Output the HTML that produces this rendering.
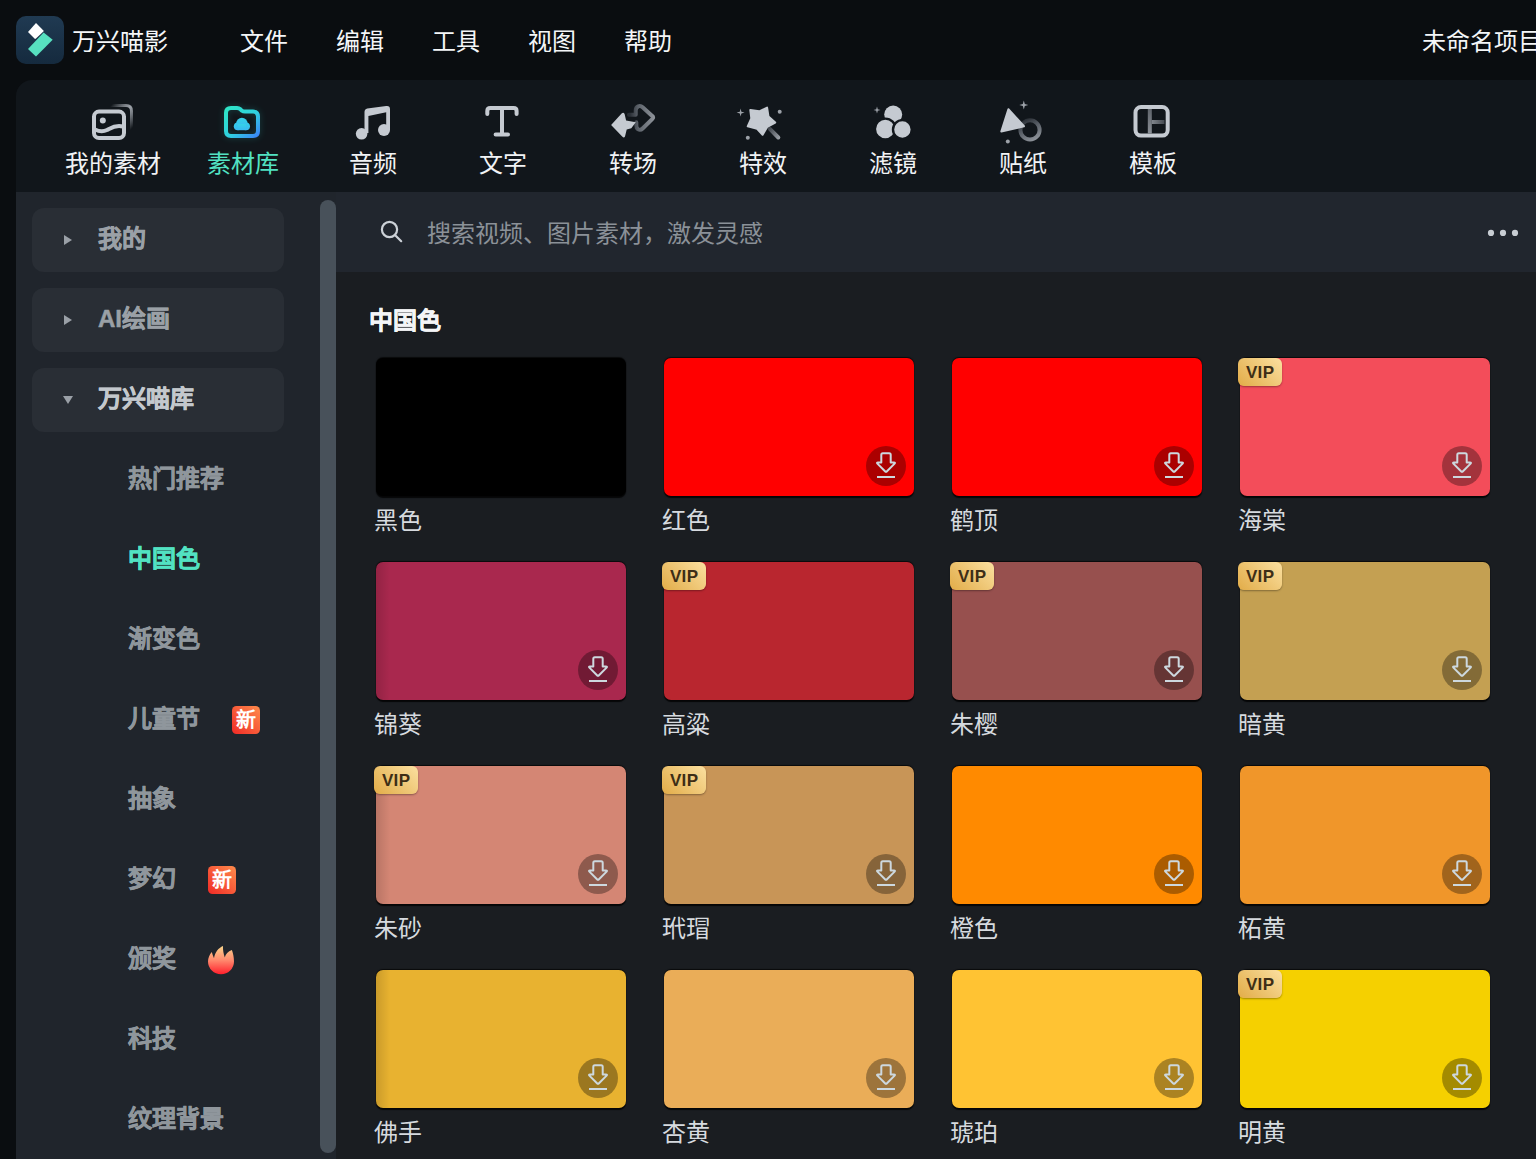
<!DOCTYPE html>
<html lang="zh-CN"><head><meta charset="utf-8">
<style>
*{margin:0;padding:0;box-sizing:border-box}
html,body{width:1536px;height:1159px;overflow:hidden;background:#0a0d10;font-family:"Liberation Sans",sans-serif;color:#fff}
.a{position:absolute}
.t{position:absolute;white-space:nowrap;line-height:1}
#top{left:0;top:0;width:1536px;height:80px;background:#0a0d10}
.menu{font-size:24px;color:#f4f6f8;top:29.5px}
#tool{left:16px;top:80px;width:1536px;height:112px;background:#11161b;border-top-left-radius:16px}
.tl{font-size:24px;color:#f1f3f5;top:152px}
.tl.on{color:#52e2c2}
#side{left:16px;top:192px;width:320px;height:967px;background:#20252c}
.sb{left:32px;width:252px;height:64px;background:#292e35;border-radius:12px}
.sbt{font-size:24px;font-weight:bold;color:#9aa0a6;-webkit-text-stroke:0.5px currentColor}
.si{font-size:24px;font-weight:bold;color:#8f969c;-webkit-text-stroke:0.5px currentColor}
#scroll{left:320px;top:200px;width:16px;height:953px;background:#48515a;border-radius:8px}
#search{left:336px;top:192px;width:1200px;height:80px;background:#21262e}
#content{left:336px;top:272px;width:1200px;height:887px;background:#1a1d21}
.card{position:absolute;width:250px;height:138px;border-radius:7px;box-shadow:0 1.5px 1px rgba(0,0,0,.8),0 -1px 1px rgba(0,0,0,.65),0 0 1px rgba(0,0,0,.35)}
.lsh{position:absolute;left:0;top:0;bottom:0;width:14px;border-radius:6px 0 0 6px;background:linear-gradient(90deg,rgba(0,0,0,.13),rgba(0,0,0,0))}
.lab{position:absolute;font-size:24px;color:#d6dadf;line-height:1;white-space:nowrap}
.dl{position:absolute;right:8px;bottom:10px;width:40px;height:40px;border-radius:50%;background:rgba(0,0,0,.33)}
.dl svg{position:absolute;left:0;top:0}
.vip{position:absolute;left:-2px;top:0;width:44px;height:28px;border-radius:6px;background:linear-gradient(225deg,#fbe0a0 0%,#efc878 45%,#e2ac48 100%);font-size:17px;font-weight:bold;color:#3d2e16;text-align:center;line-height:30px;letter-spacing:0.3px;text-indent:0.3px;box-shadow:0 1px 2px rgba(0,0,0,.35)}
</style></head><body>
<div id="top" class="a"></div>
<!-- logo -->
<div class="a" style="left:16px;top:16px;width:48px;height:48px;border-radius:10px;background:linear-gradient(180deg,#203a52,#152a3e)"></div>
<svg class="a" style="left:16px;top:16px" width="48" height="48" viewBox="0 0 48 48">
<path d="M20 7 L27.9 14.9 L20 22.5 L19 23 L12 16 Z" fill="#fff" transform="translate(0,0)"/>
<path d="M12 33 L27.6 16.5 L36.7 23.7 L20 40.6 Z" fill="#57e0bf"/>
</svg>
<div class="t menu" style="left:72px">万兴喵影</div>
<div class="t menu" style="left:240px">文件</div>
<div class="t menu" style="left:336px">编辑</div>
<div class="t menu" style="left:432px">工具</div>
<div class="t menu" style="left:528px">视图</div>
<div class="t menu" style="left:624px">帮助</div>
<div class="t menu" style="left:1422px">未命名项目</div>

<div id="tool" class="a"></div>
<div class="t tl" style="left:65px">我的素材</div>
<div class="t tl on" style="left:207px">素材库</div>
<div class="t tl" style="left:349px">音频</div>
<div class="t tl" style="left:479px">文字</div>
<div class="t tl" style="left:609px">转场</div>
<div class="t tl" style="left:739px">特效</div>
<div class="t tl" style="left:869px">滤镜</div>
<div class="t tl" style="left:999px">贴纸</div>
<div class="t tl" style="left:1129px">模板</div>
<!--ICONS-->
<svg class="a" style="left:0;top:0" width="1536" height="200" viewBox="0 0 1536 200">
<defs>
<linearGradient id="gFold" x1="0" y1="0" x2="1" y2="1"><stop offset="0" stop-color="#2ee6c6"/><stop offset="0.55" stop-color="#2fd0e0"/><stop offset="1" stop-color="#3b86f6"/></linearGradient>
<linearGradient id="gCloud" x1="0" y1="0" x2="0" y2="1"><stop offset="0" stop-color="#35d2e8"/><stop offset="1" stop-color="#38b8f2"/></linearGradient>
<linearGradient id="gArc" x1="0" y1="0" x2="1" y2="1"><stop offset="0" stop-color="#c5cad1" stop-opacity="0"/><stop offset="0.5" stop-color="#9ea3aa"/><stop offset="1" stop-color="#c5cad1" stop-opacity="0"/></linearGradient>
<linearGradient id="gTr" x1="630" y1="0" x2="654" y2="0" gradientUnits="userSpaceOnUse"><stop offset="0" stop-color="#2a2f36"/><stop offset="0.35" stop-color="#5d636b"/><stop offset="1" stop-color="#8d9299"/></linearGradient>
<linearGradient id="gWand" x1="769" y1="127" x2="780" y2="138" gradientUnits="userSpaceOnUse"><stop offset="0" stop-color="#3a3f46"/><stop offset="1" stop-color="#9da2a9"/></linearGradient>
<linearGradient id="gRing" x1="1024" y1="118" x2="1036" y2="142" gradientUnits="userSpaceOnUse"><stop offset="0" stop-color="#22272e"/><stop offset="0.45" stop-color="#5a6068"/><stop offset="1" stop-color="#969ba2"/></linearGradient>
<linearGradient id="gTplV" x1="0" y1="107" x2="0" y2="136" gradientUnits="userSpaceOnUse"><stop offset="0" stop-color="#5c6168"/><stop offset="1" stop-color="#8e939a"/></linearGradient>
<linearGradient id="gTplH" x1="1150" y1="0" x2="1166" y2="0" gradientUnits="userSpaceOnUse"><stop offset="0" stop-color="#8a8f96"/><stop offset="1" stop-color="#3e434a"/></linearGradient>
<filter id="glow" x="-50%" y="-50%" width="200%" height="200%"><feGaussianBlur stdDeviation="3"/></filter>
</defs>
<g fill="none" stroke="#c5cad1" stroke-linecap="round" stroke-linejoin="round">
 <!-- my media -->
 <path d="M111 105.5 H126 Q131.5 105.5 131.5 111 V129" stroke="url(#gArc)" stroke-width="3"/>
 <rect x="94" y="111.6" width="30" height="26.4" rx="5" stroke-width="4"/>
 <path d="M95 129.5 C99 131.5 103 132 107 130 C111 128 115 124.5 123 126.5" stroke-width="4"/>
 <!-- folder glow -->
 <path d="M226 113 Q226 108 231 108 H237 Q239 108 240.5 109.3 L242 110.8 Q243 111.6 245 111.6 H253 Q258 111.6 258 116.6 V131 Q258 136 253 136 H231 Q226 136 226 131 Z" stroke="#2fd9cf" stroke-width="5" opacity="0.18" filter="url(#glow)"/>
 <path d="M226 113 Q226 108 231 108 H237 Q239 108 240.5 109.3 L242 110.8 Q243 111.6 245 111.6 H253 Q258 111.6 258 116.6 V131 Q258 136 253 136 H231 Q226 136 226 131 Z" stroke="url(#gFold)" stroke-width="4"/>
 <!-- T -->
 <path d="M487.3 114 V111 Q487.3 108 490.3 108 H513.6 Q516.6 108 516.6 111 V114" stroke-width="4"/>
 <path d="M502 108 V134.4 M495.6 134.4 H508" stroke-width="4"/>
 <!-- transition outline arrow -->
 <path d="M629 114.8 H635.7 V110.5 Q635.7 107.6 638.2 106.4 Q640.6 105.4 642.6 107.2 L652.2 116 Q654 117.2 652.4 118.8 L642.6 128.5 Q640.5 130.5 638 129.3 Q636.3 128.2 636.3 125.5 V122.3" stroke="url(#gTr)" stroke-width="4"/>
 <!-- wand -->
 <path d="M769.8 128.8 L778.3 137.5" stroke="url(#gWand)" stroke-width="4"/>
 <!-- sticker ring -->
 <circle cx="1030" cy="129.9" r="9.6" stroke="url(#gRing)" stroke-width="4"/>
 <!-- template -->
 <rect x="1135.5" y="107" width="32.2" height="28.6" rx="5.5" stroke-width="4"/>
 <path d="M1149.8 109 V133.6" stroke="url(#gTplV)" stroke-width="4" stroke-linecap="butt"/>
 <path d="M1151.8 122 H1164.5" stroke="url(#gTplH)" stroke-width="4" stroke-linecap="butt"/>
</g>
<g fill="#c5cad1">
 <circle cx="102.8" cy="120.6" r="3"/>
 <g fill="url(#gCloud)"><circle cx="237.7" cy="126.3" r="3.9"/><circle cx="246.1" cy="126.3" r="3.9"/><circle cx="241.9" cy="123.6" r="5.8"/><rect x="237.7" y="124" width="8.4" height="6.2"/></g>
 <!-- music -->
 <circle cx="361.6" cy="133.8" r="5.8"/>
 <circle cx="384" cy="130" r="6"/>
 <path d="M364.5 133 V112 Q364.5 109.2 367.3 108.6 L386.2 106 Q390 105.5 390 109.2 V130 H386.2 V112.2 L368.4 115.9 V133 Z"/>
 <!-- transition solid arrow -->
 <path d="M611.1 125 L621.6 113.6 Q623.4 111.8 624.6 114 L626.1 120.4 L635.8 122.3 L631.3 128.2 L626.7 129.5 L625 136.5 Q624 138.5 622.2 136.6 Z"/>
 <!-- star -->
 <path d="M767.1 107.6 L768.5 116.6 L775.2 122.5 L767.3 126.8 L762.6 134.8 L757.1 128.8 L747.7 126.4 L751.3 118.4 L750.3 110 L759.3 111.3 Z" stroke="#c5cad1" stroke-width="2" stroke-linejoin="round"/>
 <circle cx="779.7" cy="111.7" r="2" fill="#9ca1a8"/>
 <circle cx="747.8" cy="137.7" r="2" fill="#9ca1a8"/>
 <path d="M740.6 108.6 L741.4 111.8 L744.6 112.6 L741.4 113.4 L740.6 116.6 L739.8 113.4 L736.6 112.6 L739.8 111.8 Z" fill="#9ca1a8"/>
 <!-- filters -->
 <circle cx="893.2" cy="114.5" r="9"/>
 <circle cx="885.3" cy="129" r="10.4" stroke="#11161b" stroke-width="2.4"/>
 <circle cx="902.4" cy="129.5" r="9.4" stroke="#11161b" stroke-width="2.4"/>
 <path d="M877 106.5 L877.8 109.2 L880.5 110 L877.8 110.8 L877 113.5 L876.2 110.8 L873.5 110 L876.2 109.2 Z" fill="#9ca1a8"/>
 <!-- sticker -->
 <path d="M1008.4 109.3 L1024 126.25 L1001.3 131.5 Z" stroke="#c5cad1" stroke-width="2" stroke-linejoin="round"/>
 <path d="M1023.8 100.5 L1024.8 104 L1028.3 105 L1024.8 106 L1023.8 109.5 L1022.8 106 L1019.3 105 L1022.8 104 Z" fill="#9ca1a8"/>
 <circle cx="1007.8" cy="141.6" r="2" fill="#9ca1a8"/>
</g>
</svg>
<!--/ICONS-->

<div id="side" class="a"></div>
<div class="a sb" style="top:208px"></div>
<div class="a sb" style="top:288px"></div>
<div class="a sb" style="top:368px"></div>
<div class="t sbt" style="left:98px;top:227px">我的</div>
<div class="t sbt" style="left:98px;top:307px">AI绘画</div>
<div class="t sbt" style="left:98px;top:387px;color:#c3c8cd">万兴喵库</div>
<div class="t si" style="left:128px;top:467px">热门推荐</div>
<div class="t si" style="left:128px;top:547px;color:#52e2c2">中国色</div>
<div class="t si" style="left:128px;top:627px">渐变色</div>
<div class="t si" style="left:128px;top:707px">儿童节</div>
<div class="t si" style="left:128px;top:787px">抽象</div>
<div class="t si" style="left:128px;top:867px">梦幻</div>
<div class="t si" style="left:128px;top:947px">颁奖</div>
<div class="t si" style="left:128px;top:1027px">科技</div>
<div class="t si" style="left:128px;top:1107px">纹理背景</div>
<div id="scroll" class="a"></div>
<svg class="a" style="left:0;top:192px" width="336" height="967" viewBox="0 192 336 967">
<defs>
<linearGradient id="gNew" x1="1" y1="0" x2="0" y2="1"><stop offset="0" stop-color="#ff8c4c"/><stop offset="1" stop-color="#f02a26"/></linearGradient>
<linearGradient id="gFire" x1="0" y1="0" x2="0" y2="1"><stop offset="0" stop-color="#f9d58c"/><stop offset="0.5" stop-color="#ff8a6e"/><stop offset="1" stop-color="#ff1f2c"/></linearGradient>
</defs>
<g fill="#9aa0a7">
<path d="M64 235 L72 240 L64 245 Z"/>
<path d="M64 315 L72 320 L64 325 Z"/>
<path d="M63 396 L73 396 L68 404 Z"/>
</g>
<rect x="232" y="706" width="28" height="28" rx="4.5" fill="url(#gNew)"/>
<rect x="208" y="866" width="28" height="28" rx="4.5" fill="url(#gNew)"/>
<path transform="translate(208,946)" d="M3.8 6 C1.5 8.5 0 12 0 15.5 A13 12.7 0 0 0 26 15.5 C26 11 25 7 23.9 3.9 C20 5 17.6 8 16.8 11.4 C15.6 8 14.8 4 15 0 C10.5 2 7 6 6 12.3 C5 10 4.3 8 3.8 6 Z" fill="url(#gFire)"/>
</svg>
<div class="t" style="left:236px;top:710px;font-size:20px;font-weight:bold;color:#fff">新</div>
<div class="t" style="left:212px;top:870px;font-size:20px;font-weight:bold;color:#fff">新</div>


<div id="search" class="a"></div>
<div id="content" class="a"></div>
<svg class="a" style="left:336px;top:192px" width="1200" height="80" viewBox="336 192 1200 80">
<g fill="none" stroke="#ccd1d7" stroke-width="2.2" stroke-linecap="round"><circle cx="389.5" cy="229.5" r="7.6"/><path d="M395.2 235.2 L401.2 241.2"/></g>
<g fill="#c8cdd3"><circle cx="1491" cy="232.9" r="3.1"/><circle cx="1503" cy="232.9" r="3.1"/><circle cx="1515" cy="232.9" r="3.1"/></g>
</svg>

<div class="t" style="left:427px;top:222px;font-size:24px;color:#8b9198">搜索视频、图片素材，激发灵感</div>
<div class="t" style="left:369px;top:309px;font-size:24px;font-weight:bold;color:#f4f5f7;-webkit-text-stroke:0.5px currentColor">中国色</div>
<!--CARDS-->
<div class="card" style="left:376px;top:358px;background:#000000"><div class="lsh"></div></div>
<div class="lab" style="left:374px;top:509px">黑色</div>
<div class="card" style="left:664px;top:358px;background:#ff0000"><div class="dl"><svg width="40" height="40" viewBox="0 0 40 40"><path d="M15.3 16.5 V8.7 Q15.3 7.2 16.8 7.2 H23.2 Q24.7 7.2 24.7 8.7 V16.5 H28 Q29.6 16.5 28.6 17.6 L21 25.2 Q20 26.2 19 25.2 L11.4 17.6 Q10.4 16.5 12 16.5 Z" fill="none" stroke="#cdd8de" stroke-width="2" stroke-linejoin="round"/><rect x="11" y="30" width="18" height="2" fill="#cdd8de"/></svg></div></div>
<div class="lab" style="left:662px;top:509px">红色</div>
<div class="card" style="left:952px;top:358px;background:#ff0000"><div class="dl"><svg width="40" height="40" viewBox="0 0 40 40"><path d="M15.3 16.5 V8.7 Q15.3 7.2 16.8 7.2 H23.2 Q24.7 7.2 24.7 8.7 V16.5 H28 Q29.6 16.5 28.6 17.6 L21 25.2 Q20 26.2 19 25.2 L11.4 17.6 Q10.4 16.5 12 16.5 Z" fill="none" stroke="#cdd8de" stroke-width="2" stroke-linejoin="round"/><rect x="11" y="30" width="18" height="2" fill="#cdd8de"/></svg></div></div>
<div class="lab" style="left:950px;top:509px">鹤顶</div>
<div class="card" style="left:1240px;top:358px;background:#f34d5a"><div class="dl"><svg width="40" height="40" viewBox="0 0 40 40"><path d="M15.3 16.5 V8.7 Q15.3 7.2 16.8 7.2 H23.2 Q24.7 7.2 24.7 8.7 V16.5 H28 Q29.6 16.5 28.6 17.6 L21 25.2 Q20 26.2 19 25.2 L11.4 17.6 Q10.4 16.5 12 16.5 Z" fill="none" stroke="#cdd8de" stroke-width="2" stroke-linejoin="round"/><rect x="11" y="30" width="18" height="2" fill="#cdd8de"/></svg></div><div class="vip">VIP</div></div>
<div class="lab" style="left:1238px;top:509px">海棠</div>
<div class="card" style="left:376px;top:562px;background:#a9284e"><div class="lsh"></div><div class="dl"><svg width="40" height="40" viewBox="0 0 40 40"><path d="M15.3 16.5 V8.7 Q15.3 7.2 16.8 7.2 H23.2 Q24.7 7.2 24.7 8.7 V16.5 H28 Q29.6 16.5 28.6 17.6 L21 25.2 Q20 26.2 19 25.2 L11.4 17.6 Q10.4 16.5 12 16.5 Z" fill="none" stroke="#cdd8de" stroke-width="2" stroke-linejoin="round"/><rect x="11" y="30" width="18" height="2" fill="#cdd8de"/></svg></div></div>
<div class="lab" style="left:374px;top:713px">锦葵</div>
<div class="card" style="left:664px;top:562px;background:#b9262f"><div class="vip">VIP</div></div>
<div class="lab" style="left:662px;top:713px">高粱</div>
<div class="card" style="left:952px;top:562px;background:#97504e"><div class="dl"><svg width="40" height="40" viewBox="0 0 40 40"><path d="M15.3 16.5 V8.7 Q15.3 7.2 16.8 7.2 H23.2 Q24.7 7.2 24.7 8.7 V16.5 H28 Q29.6 16.5 28.6 17.6 L21 25.2 Q20 26.2 19 25.2 L11.4 17.6 Q10.4 16.5 12 16.5 Z" fill="none" stroke="#cdd8de" stroke-width="2" stroke-linejoin="round"/><rect x="11" y="30" width="18" height="2" fill="#cdd8de"/></svg></div><div class="vip">VIP</div></div>
<div class="lab" style="left:950px;top:713px">朱樱</div>
<div class="card" style="left:1240px;top:562px;background:#c4a052"><div class="dl"><svg width="40" height="40" viewBox="0 0 40 40"><path d="M15.3 16.5 V8.7 Q15.3 7.2 16.8 7.2 H23.2 Q24.7 7.2 24.7 8.7 V16.5 H28 Q29.6 16.5 28.6 17.6 L21 25.2 Q20 26.2 19 25.2 L11.4 17.6 Q10.4 16.5 12 16.5 Z" fill="none" stroke="#cdd8de" stroke-width="2" stroke-linejoin="round"/><rect x="11" y="30" width="18" height="2" fill="#cdd8de"/></svg></div><div class="vip">VIP</div></div>
<div class="lab" style="left:1238px;top:713px">暗黄</div>
<div class="card" style="left:376px;top:766px;background:#d48674"><div class="lsh"></div><div class="dl"><svg width="40" height="40" viewBox="0 0 40 40"><path d="M15.3 16.5 V8.7 Q15.3 7.2 16.8 7.2 H23.2 Q24.7 7.2 24.7 8.7 V16.5 H28 Q29.6 16.5 28.6 17.6 L21 25.2 Q20 26.2 19 25.2 L11.4 17.6 Q10.4 16.5 12 16.5 Z" fill="none" stroke="#cdd8de" stroke-width="2" stroke-linejoin="round"/><rect x="11" y="30" width="18" height="2" fill="#cdd8de"/></svg></div><div class="vip">VIP</div></div>
<div class="lab" style="left:374px;top:917px">朱砂</div>
<div class="card" style="left:664px;top:766px;background:#c89557"><div class="dl"><svg width="40" height="40" viewBox="0 0 40 40"><path d="M15.3 16.5 V8.7 Q15.3 7.2 16.8 7.2 H23.2 Q24.7 7.2 24.7 8.7 V16.5 H28 Q29.6 16.5 28.6 17.6 L21 25.2 Q20 26.2 19 25.2 L11.4 17.6 Q10.4 16.5 12 16.5 Z" fill="none" stroke="#cdd8de" stroke-width="2" stroke-linejoin="round"/><rect x="11" y="30" width="18" height="2" fill="#cdd8de"/></svg></div><div class="vip">VIP</div></div>
<div class="lab" style="left:662px;top:917px">玳瑁</div>
<div class="card" style="left:952px;top:766px;background:#ff8a00"><div class="dl"><svg width="40" height="40" viewBox="0 0 40 40"><path d="M15.3 16.5 V8.7 Q15.3 7.2 16.8 7.2 H23.2 Q24.7 7.2 24.7 8.7 V16.5 H28 Q29.6 16.5 28.6 17.6 L21 25.2 Q20 26.2 19 25.2 L11.4 17.6 Q10.4 16.5 12 16.5 Z" fill="none" stroke="#cdd8de" stroke-width="2" stroke-linejoin="round"/><rect x="11" y="30" width="18" height="2" fill="#cdd8de"/></svg></div></div>
<div class="lab" style="left:950px;top:917px">橙色</div>
<div class="card" style="left:1240px;top:766px;background:#f0962a"><div class="dl"><svg width="40" height="40" viewBox="0 0 40 40"><path d="M15.3 16.5 V8.7 Q15.3 7.2 16.8 7.2 H23.2 Q24.7 7.2 24.7 8.7 V16.5 H28 Q29.6 16.5 28.6 17.6 L21 25.2 Q20 26.2 19 25.2 L11.4 17.6 Q10.4 16.5 12 16.5 Z" fill="none" stroke="#cdd8de" stroke-width="2" stroke-linejoin="round"/><rect x="11" y="30" width="18" height="2" fill="#cdd8de"/></svg></div></div>
<div class="lab" style="left:1238px;top:917px">柘黄</div>
<div class="card" style="left:376px;top:970px;background:#e8b230"><div class="lsh"></div><div class="dl"><svg width="40" height="40" viewBox="0 0 40 40"><path d="M15.3 16.5 V8.7 Q15.3 7.2 16.8 7.2 H23.2 Q24.7 7.2 24.7 8.7 V16.5 H28 Q29.6 16.5 28.6 17.6 L21 25.2 Q20 26.2 19 25.2 L11.4 17.6 Q10.4 16.5 12 16.5 Z" fill="none" stroke="#cdd8de" stroke-width="2" stroke-linejoin="round"/><rect x="11" y="30" width="18" height="2" fill="#cdd8de"/></svg></div></div>
<div class="lab" style="left:374px;top:1121px">佛手</div>
<div class="card" style="left:664px;top:970px;background:#eaad58"><div class="dl"><svg width="40" height="40" viewBox="0 0 40 40"><path d="M15.3 16.5 V8.7 Q15.3 7.2 16.8 7.2 H23.2 Q24.7 7.2 24.7 8.7 V16.5 H28 Q29.6 16.5 28.6 17.6 L21 25.2 Q20 26.2 19 25.2 L11.4 17.6 Q10.4 16.5 12 16.5 Z" fill="none" stroke="#cdd8de" stroke-width="2" stroke-linejoin="round"/><rect x="11" y="30" width="18" height="2" fill="#cdd8de"/></svg></div></div>
<div class="lab" style="left:662px;top:1121px">杏黄</div>
<div class="card" style="left:952px;top:970px;background:#ffc333"><div class="dl"><svg width="40" height="40" viewBox="0 0 40 40"><path d="M15.3 16.5 V8.7 Q15.3 7.2 16.8 7.2 H23.2 Q24.7 7.2 24.7 8.7 V16.5 H28 Q29.6 16.5 28.6 17.6 L21 25.2 Q20 26.2 19 25.2 L11.4 17.6 Q10.4 16.5 12 16.5 Z" fill="none" stroke="#cdd8de" stroke-width="2" stroke-linejoin="round"/><rect x="11" y="30" width="18" height="2" fill="#cdd8de"/></svg></div></div>
<div class="lab" style="left:950px;top:1121px">琥珀</div>
<div class="card" style="left:1240px;top:970px;background:#f5d000"><div class="dl"><svg width="40" height="40" viewBox="0 0 40 40"><path d="M15.3 16.5 V8.7 Q15.3 7.2 16.8 7.2 H23.2 Q24.7 7.2 24.7 8.7 V16.5 H28 Q29.6 16.5 28.6 17.6 L21 25.2 Q20 26.2 19 25.2 L11.4 17.6 Q10.4 16.5 12 16.5 Z" fill="none" stroke="#cdd8de" stroke-width="2" stroke-linejoin="round"/><rect x="11" y="30" width="18" height="2" fill="#cdd8de"/></svg></div><div class="vip">VIP</div></div>
<div class="lab" style="left:1238px;top:1121px">明黄</div>
<!--/CARDS--><!--/CARDS--><!--/CARDS--><!--/CARDS-->
</body></html>
